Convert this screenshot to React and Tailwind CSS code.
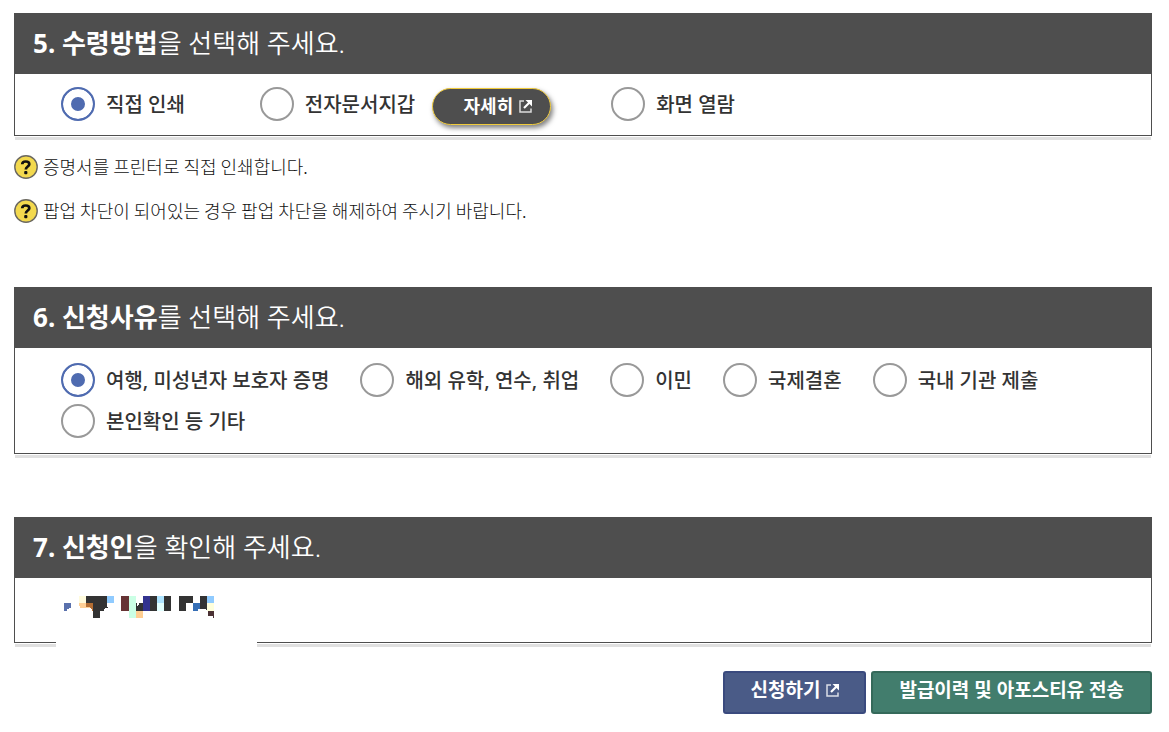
import { useState } from "react";
import clsx from "clsx";

const receiveMethods = [
    { value: "print", label: "직접 인쇄" },
    { value: "wallet", label: "전자문서지갑", detail: true },
    { value: "screen", label: "화면 열람" },
];

const reasons = [
    { value: "travel", label: "여행, 미성년자 보호자 증명" },
    { value: "study", label: "해외 유학, 연수, 취업" },
    { value: "emigration", label: "이민" },
    { value: "marriage", label: "국제결혼" },
    { value: "domestic", label: "국내 기관 제출" },
    { value: "etc", label: "본인확인 등 기타" },
];

const notices = [
    "증명서를 프린터로 직접 인쇄합니다.",
    "팝업 차단이 되어있는 경우 팝업 차단을 해제하여 주시기 바랍니다.",
];

const NewWindowIcon = ({ className }) => (
    <svg viewBox="0 0 13 13" className={clsx("h-[13px] w-[13px] shrink-0", className)} fill="none" stroke="currentColor" aria-hidden="true">
        <path d="M5 1H1V12H12V8.5" strokeWidth="1.5" strokeOpacity="0.8" />
        <path d="M5 8L10.5 2.5" strokeWidth="2.2" />
        <path d="M6.5 0H13V6.5Z" fill="currentColor" stroke="none" />
    </svg>
);

const HelpIcon = () => (
    <svg viewBox="0 0 24 24" className="h-6 w-6 shrink-0" aria-hidden="true">
        <circle cx="12" cy="12" r="11.2" fill="#f3d94e" stroke="#6b6860" strokeWidth="1.4" />
        <path d="M8.2 9.2C8.3 7.4 9.7 6.5 11.7 6.5C13.9 6.5 15.3 7.5 15.3 9.2C15.3 11.5 11.8 11.5 11.8 14.5" fill="none" stroke="#111" strokeWidth="2.7" />
        <rect x="10.2" y="16" width="3.2" height="3.2" rx="1" fill="#111" />
    </svg>
);

// applicant name is masked with a mosaic
const MaskedName = () => (
    <svg viewBox="42 33 450 66" className="h-[22px] w-[150px]" shapeRendering="crispEdges" role="img" aria-label="신청인">
        <path d="M42 54H63V69H57V73H51V78H42Z" fill="#5a71ad" />
        <path d="M87 33H108V54H87Z" fill="#fffbdc" />
        <path d="M87 54H108V69H90V63H87Z" fill="#ffd097" />
        <path d="M108 33H171V66H174V69H165V73H162V78H150V99H129V54H108Z" fill="#333" />
        <path d="M108 54H129V78H126V73H123V69H108Z" fill="#b46e34" />
        <path d="M108 66H120V69H108Z" fill="#ffd097" />
        <path d="M171 33H192V54H171Z" fill="#90cbff" />
        <path d="M213 33H237V78H213Z" fill="#663334" />
        <path d="M237 33H258V99H237Z" fill="#cbffe5" />
        <path d="M258 54H279V78H258Z" fill="#333" />
        <path d="M258 54H261V63H264V60H267V54Z" fill="#fff" />
        <path d="M258 78H279V99H258Z" fill="#ffce92" />
        <path d="M279 33H300V78H279Z" fill="#333390" />
        <path d="M300 33H321V78H300Z" fill="#333" />
        <path d="M321 33H342V54H321Z" fill="#aee4ff" />
        <path d="M321 54H342V78H321Z" fill="#e2ffff" />
        <path d="M342 33H363V78H342Z" fill="#333" />
        <path d="M387 33H429V54H408V78H387Z" fill="#333" />
        <path d="M429 54H450V72H444V78H429Z" fill="#356eb5" />
        <path d="M450 33H471V75H468V72H450Z" fill="#333" />
        <path d="M471 33H492V54H471Z" fill="#90cbff" />
        <path d="M471 54H492V78H471Z" fill="#ffffdc" />
        <path d="M474 78H492V99H489V93H474Z" fill="#4b3134" />
    </svg>
);

const Section = ({ number, strong, rest, className, children }) => (
    <section className={clsx("relative border border-t-0 border-[#4e4e4e] shadow-[0_1px_0_#fff,0_5px_0_-1px_#e0e0e0]", className)}>
        <h2 className="-mx-px bg-[#4e4e4e] px-[19px] py-3 text-[26px] leading-[37px] font-[350] text-white">
            <strong className="font-bold">
                {number}. {strong}
            </strong>
            {rest}
        </h2>
        {children}
    </section>
);

const Radio = ({ name, value, label, checked, onChange }) => (
    <label className="flex h-[34px] items-center gap-[11px] text-[20px] font-medium whitespace-nowrap text-[#333]">
        <input
            type="radio"
            name={name}
            value={value}
            checked={checked}
            onChange={() => onChange(value)}
            className="h-[34px] w-[34px] shrink-0 appearance-none rounded-full border-2 border-[#999] bg-white checked:border-[#4f6bb0] checked:bg-[#4f6bb0] checked:shadow-[inset_0_0_0_8px_#fff]"
        />
        <span className="pt-0.5">{label}</span>
    </label>
);

const App = () => {
    const [method, setMethod] = useState("print");
    const [reason, setReason] = useState("travel");

    return (
        <main className="bg-white pt-[13px] pr-[17px] pb-4 pl-[14px] font-['Noto_Sans','Noto_Sans_CJK_KR',sans-serif]">
            <Section number={5} strong="수령방법" rest="을 선택해 주세요.">
                <div className="flex flex-wrap items-center gap-x-[75px] px-[46px] pt-[13px] pb-[14px]">
                    {receiveMethods.map(({ value, label, detail }) => (
                        <div key={value} className={clsx("flex h-[34px] items-center gap-[17px]", detail && "-mr-[15px]")}>
                            <Radio name="method" value={value} label={label} checked={method === value} onChange={setMethod} />
                            {detail && (
                                <button
                                    type="button"
                                    className="mt-1 flex h-[37px] w-[119px] items-center justify-end gap-1.5 rounded-full border border-[#f0cb3c] bg-[#4e4e4e] pr-[18px] text-[18px] font-bold text-white shadow-[2px_3px_5px_rgba(0,0,0,0.5)]"
                                >
                                    자세히
                                    <NewWindowIcon />
                                </button>
                            )}
                        </div>
                    ))}
                </div>
            </Section>

            <ul className="mt-[19px] space-y-5 font-['Noto_Sans_CJK_KR',sans-serif]">
                {notices.map((notice) => (
                    <li key={notice} className="flex h-6 items-center gap-[5px] text-[18px] leading-6 font-light text-[#111]">
                        <HelpIcon />
                        <span className="pb-0.5">{notice}</span>
                    </li>
                ))}
            </ul>

            <Section number={6} strong="신청사유" rest="를 선택해 주세요." className="mt-16">
                <div className="flex flex-wrap gap-x-[31px] gap-y-[7px] px-[46px] py-[15px]">
                    {reasons.map(({ value, label }) => (
                        <Radio key={value} name="reason" value={value} label={label} checked={reason === value} onChange={setReason} />
                    ))}
                </div>
            </Section>

            <Section number={7} strong="신청인" rest="을 확인해 주세요." className="mt-[63px]">
                <div className="h-16">
                    <div className="absolute -bottom-[5px] left-[41px] h-[61px] w-[201px] bg-white px-2 pt-[10px]">
                        <MaskedName />
                    </div>
                </div>
            </Section>

            <div className="mt-7 flex justify-end gap-[5px] text-[19px] font-bold text-white">
                <button type="button" className="flex h-[43px] items-center gap-1.5 rounded-[3px] border-2 border-[#3a4a7e] bg-[#4a5b87] px-[25px] pb-1">
                    신청하기
                    <NewWindowIcon />
                </button>
                <button type="button" className="h-[43px] rounded-[3px] border-2 border-[#35695a] bg-[#427d6d] px-[26px] pb-1">
                    발급이력 및 아포스티유 전송
                </button>
            </div>
        </main>
    );
};

export default App;
